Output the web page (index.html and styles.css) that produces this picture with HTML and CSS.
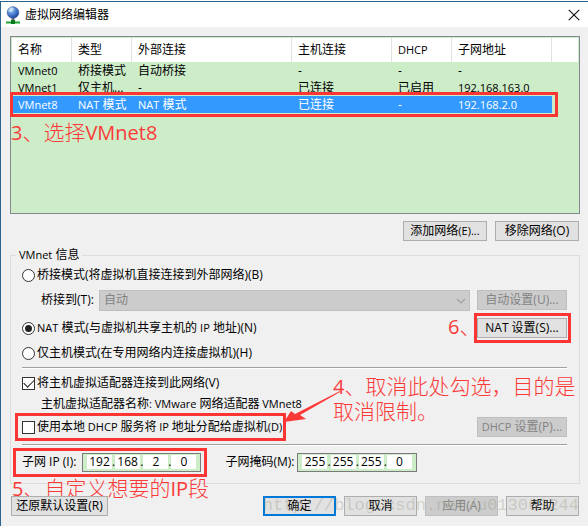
FILE: index.html
```html
<!DOCTYPE html>
<html lang="zh-CN">
<head>
<meta charset="utf-8">
<title>虚拟网络编辑器</title>
<link rel="stylesheet" href="styles.css">
</head>
<body>
<main class="dialog">
  <header class="titlebar">
    <svg class="app-icon" viewBox="0 0 16 18" aria-hidden="true">
      <defs><radialGradient id="globe" cx="35%" cy="28%" r="75%"><stop offset="0" stop-color="#d5e8fb"/><stop offset=".4" stop-color="#5c93dd"/><stop offset="1" stop-color="#173f9c"/></radialGradient></defs>
      <path d="M6.500 11h3v5h-3z" fill="#777"/>
      <path d="M1 15.500h14v2H1z" fill="#18a832"/>
      <path d="M6 14h4v4H6z" fill="#087a1c"/>
      <circle cx="8" cy="6.500" r="5.800" fill="url(#globe)" stroke="#2c4f91" stroke-width=".6"/>
      <path d="M5 2c2-1 4 0 4 1L7 5 5 6 3 5z" fill="#d6ebf8" opacity=".6"/>
    </svg>
    <h1 class="title">虚拟网络编辑器</h1>
    <button class="close" aria-label="关闭"><svg viewBox="0 0 11 11" aria-hidden="true"><path d="M.7.7l9.600 9.600M10.300.7L.7 10.300" stroke="#111" stroke-width="1"/></svg></button>
  </header>

  <div class="content">
    <section class="list">
      <table class="networks">
        <colgroup><col class="c-s"><col class="c-s"><col class="c-l"><col class="c-m"><col class="c-s"><col class="c-m"><col></colgroup>
        <thead><tr><th>名称</th><th>类型</th><th>外部连接</th><th>主机连接</th><th class="latin">DHCP</th><th>子网地址</th><th></th></tr></thead>
        <tbody>
          <tr><td class="latin">VMnet0</td><td>桥接模式</td><td>自动桥接</td><td>-</td><td>-</td><td>-</td><td></td></tr>
          <tr><td class="latin">VMnet1</td><td>仅主机...</td><td>-</td><td>已连接</td><td>已启用</td><td class="latin">192.168.163.0</td><td></td></tr>
          <tr class="selected"><td class="latin">VMnet8</td><td><span class="latin">NAT</span> 模式</td><td><span class="latin">NAT</span> 模式</td><td>已连接</td><td>-</td><td class="latin">192.168.2.0</td><td></td></tr>
        </tbody>
      </table>
      <span class="mark mark-row"></span>
      <p class="note note-3"><span class="note-latin">3</span>、选择<span class="note-latin">VMnet8</span></p>
    </section>

    <div class="list-actions">
      <button class="btn">添加网络<span class="latin">(E)...</span></button>
      <button class="btn">移除网络(O)</button>
    </div>

    <fieldset class="info">
      <legend><span class="latin">VMnet</span> 信息</legend>
      <div class="row row-first"><label class="choice"><input type="radio" name="mode">桥接模式(将虚拟机直接连接到外部网络)(B)</label></div>
      <div class="row row-bridge">
        <label class="bridge-label" for="bridge">桥接到(T):</label>
        <div class="select-wrap">
          <select id="bridge" disabled><option>自动</option></select>
          <svg class="chevron" viewBox="0 0 10 6" aria-hidden="true"><path d="M1 1l4 4 4-4" fill="none" stroke="#a0a0a0" stroke-width="1.200"/></svg>
        </div>
        <button class="btn side-btn" disabled>自动设置(U)...</button>
      </div>
      <div class="row row-nat">
        <label class="choice"><input type="radio" name="mode" checked><span><span class="latin">NAT</span> 模式(与虚拟机共享主机的 <span class="latin">IP</span> 地址)(N)</span></label>
        <div class="marked">
          <button class="btn side-btn">NAT 设置(S)...</button>
          <span class="mark mark-nat"></span>
          <p class="note note-6"><span class="note-latin">6</span>、</p>
        </div>
      </div>
      <div class="row row-host"><label class="choice"><input type="radio" name="mode">仅主机模式(在专用网络内连接虚拟机)(H)</label></div>
      <hr>
      <div class="row row-adapter">
        <label class="choice"><input type="checkbox" checked>将主机虚拟适配器连接到此网络(V)</label>
      </div>
      <p class="adapter">主机虚拟适配器名称<span class="latin">: VMware </span>网络适配器<span class="latin"> VMnet8</span></p>
      <div class="row row-dhcp">
        <div class="marked">
          <label class="choice"><input type="checkbox"><span>使用本地<span class="latin"> DHCP </span>服务将<span class="latin"> IP </span>地址分配给虚拟机<span class="latin">(D)</span></span></label>
          <span class="mark mark-dhcp"></span>
          <svg class="arrow" viewBox="0 0 57 33" aria-hidden="true"><path d="M0 31L7 20l4 3L56 0v1L16 24l6 4z" fill="#fb3a38"/></svg>
          <p class="note note-4"><span class="note-latin">4</span>、取消此处勾选，目的是<br>取消限制。</p>
        </div>
        <button class="btn side-btn" disabled><span class="latin">DHCP</span> 设置(P)...</button>
      </div>
      <hr>
      <div class="row row-subnet">
        <div class="marked subnet">
          <span class="ip-label" id="ip-label">子网 IP (I):</span>
          <div class="ip" role="group" aria-labelledby="ip-label"><input aria-label="子网 IP 1" value="192">.<input aria-label="子网 IP 2" value="168">.<input aria-label="子网 IP 3" value="2">.<input aria-label="子网 IP 4" value="0"></div>
          <span class="mark mark-ip"></span>
          <p class="note note-5"><span class="note-latin">5</span>、自定义想要的<span class="note-latin">IP</span>段</p>
        </div>
        <div class="subnet">
          <span class="mask-label" id="mask-label">子网掩码(M):</span>
          <div class="ip" role="group" aria-labelledby="mask-label"><input aria-label="子网掩码 1" value="255">.<input aria-label="子网掩码 2" value="255">.<input aria-label="子网掩码 3" value="255">.<input aria-label="子网掩码 4" value="0"></div>
        </div>
      </div>
    </fieldset>

    <footer class="actions">
      <button class="btn restore">还原默认设置(R)</button>
      <button class="btn main default">确定</button>
      <button class="btn main">取消</button>
      <button class="btn main" disabled>应用(A)</button>
      <button class="btn main">帮助</button>
      <span class="watermark">http://blog.csdn.net/u013063244</span>
    </footer>
  </div>
</main>
</body>
</html>
```

FILE: styles.css
```css
* { box-sizing: border-box; }

body {
  margin: 0;
  background: #fff;
  color: #000;
  font: 12px/16px "Open Sans", "Noto Sans CJK SC", sans-serif;
}

p { margin: 0; }
button, input, select { font: inherit; color: inherit; margin: 0; }

.latin { font-size: 11px; }

.dialog {
  margin-top: 1px;
  min-height: calc(100vh - 1px);
  border-top: 1px solid #2b648e;
  border-left: 1px solid #2b648e;
  background: #f0f0f0;
}

.titlebar {
  display: flex;
  align-items: center;
  height: 25px;
  padding: 0 8px 0 4px;
  background: #fff;
}
.app-icon { width: 16px; height: 18px; }
.title { flex: 1; margin: 0 0 0 4px; font-size: 12px; font-weight: 400; }
.close { display: flex; padding: 0; border: 0; background: none; }
.close svg { width: 12px; height: 12px; }

.content { padding: 9px 8px 10px 9px; }

/* network list */
.list {
  position: relative;
  height: 178px;
  padding: 1px;
  border: 1px solid #828790;
  background: #cdecc8;
}
.networks { width: 100%; table-layout: fixed; border-collapse: collapse; }
.c-s { width: 60px; }
.c-m { width: 100px; }
.c-l { width: 160px; }
.networks th, .networks td {
  padding: 0 0 0 6px;
  text-align: left;
  font-weight: 400;
  white-space: nowrap;
  overflow: hidden;
}
.networks th { height: 24px; background: #fff; box-shadow: inset -1px 0 #e2e2e2; }
.networks th:last-child { box-shadow: none; }
.networks td { height: 17px; line-height: 17px; }
.selected td { background: #3399ff; color: #fff; }
.selected td:last-child { background: none; }

/* buttons */
.btn {
  height: 20px;
  padding: 0;
  border: 1px solid #adadad;
  background: #e1e1e1;
  line-height: 16px;
  white-space: nowrap;
}
.btn:disabled { border-color: #bfbfbf; background: #ccc; color: #838383; }
.list-actions { display: flex; justify-content: flex-end; gap: 8px; margin: 7px 0 5px; padding-right: 1px; }
.list-actions .btn { width: 84px; }
.side-btn { width: 90px; }

/* VMnet settings */
.info {
  min-width: 0;
  margin: 0;
  padding: 0 12px 11px 11px;
  border: 1px solid #dcdcdc;
}
.info legend { height: 18px; margin-left: -6px; padding: 0 3px; line-height: 18px; }
.row { display: flex; align-items: center; justify-content: space-between; height: 20px; }
.choice { display: flex; align-items: center; gap: 2px; white-space: nowrap; }
.choice input {
  appearance: none;
  display: grid;
  place-content: center;
  width: 13px;
  height: 13px;
  border: 1px solid #333;
  background: #fff;
}
.choice input[type="radio"] { border-radius: 50%; }
.choice input[type="radio"]:checked::before {
  content: "";
  width: 7px;
  height: 7px;
  border-radius: 50%;
  background: #222;
}
.choice input[type="checkbox"]:checked::before {
  content: "";
  width: 9px;
  height: 5px;
  margin-bottom: 3px;
  border: solid #222;
  border-width: 0 0 1px 1px;
  transform: rotate(-45deg);
}

.row-first { height: 22px; }
.row-bridge { margin-top: 4px; padding-left: 19px; }
.bridge-label { width: 58px; }
.select-wrap { position: relative; flex: 1; margin-right: 7px; }
.select-wrap select {
  display: block;
  appearance: none;
  width: 100%;
  height: 21px;
  padding: 0 4px;
  border: 1px solid #bfbfbf;
  border-radius: 0;
  background: #ccc;
  color: #838383;
  opacity: 1;
}
.chevron { position: absolute; right: 4px; top: 8px; width: 10px; height: 6px; }
.row-nat { margin-top: 8px; }
.row-host { margin-top: 5px; }
.info hr {
  height: 2px;
  margin: 4px 0;
  border: 0;
  border-top: 1px solid #a0a0a0;
  background: #fff;
}
.adapter { height: 20px; margin-top: 1px; padding-left: 19px; line-height: 20px; white-space: nowrap; }
.row-dhcp { margin: 3px 0 7px; }
.row-subnet { justify-content: flex-start; gap: 24px; margin-top: 6px; }
.subnet { display: flex; align-items: center; }
.ip-label { width: 60px; }
.mask-label { width: 72px; }
.ip {
  display: flex;
  align-items: center;
  height: 19px;
  padding: 0 4px;
  border: 1px solid #7a7a7a;
  background: #cdecc8;
}
.ip input {
  width: 25px;
  height: 14px;
  padding: 0;
  border: 0;
  background: #fff;
  text-align: center;
}

/* bottom row */
.actions { position: relative; display: flex; gap: 8px; margin-top: 12px; padding-right: 1px; }
.actions .main { width: 73px; }
.restore { width: 97px; margin: 0 auto 0 1px; }
.btn.default { border: 2px solid #0078d7; }
.watermark {
  position: absolute;
  right: 1px;
  top: 0;
  font: 17px/20px "Liberation Mono", monospace;
  color: rgba(150, 150, 130, 0.35);
  pointer-events: none;
}

/* annotations */
.marked { position: relative; }
.mark { position: absolute; border: 3px solid #fb3434; pointer-events: none; }
.mark-row { left: -1px; top: 55px; right: 21px; height: 25px; }
.mark-nat { inset: -5px -4px -5px -3px; }
.mark-dhcp { inset: -6px -4px -6px -7px; }
.mark-ip { inset: -5px -6px -5px -9px; }
.note {
  position: absolute;
  color: #fb3a38;
  font: 300 21px/25px "Open Sans", "Noto Sans CJK SC", sans-serif;
  white-space: nowrap;
}
.note-latin { font-size: 20px; font-weight: 400; }
.note-3 { left: 0; top: 83px; }
.note-6 { right: 94px; top: -4px; width: 25px; }
.note-4 { left: 311px; top: -45px; }
.note-5 { left: -10px; top: 23px; }
.arrow { position: absolute; left: 262px; top: -28px; width: 57px; height: 33px; }
```
